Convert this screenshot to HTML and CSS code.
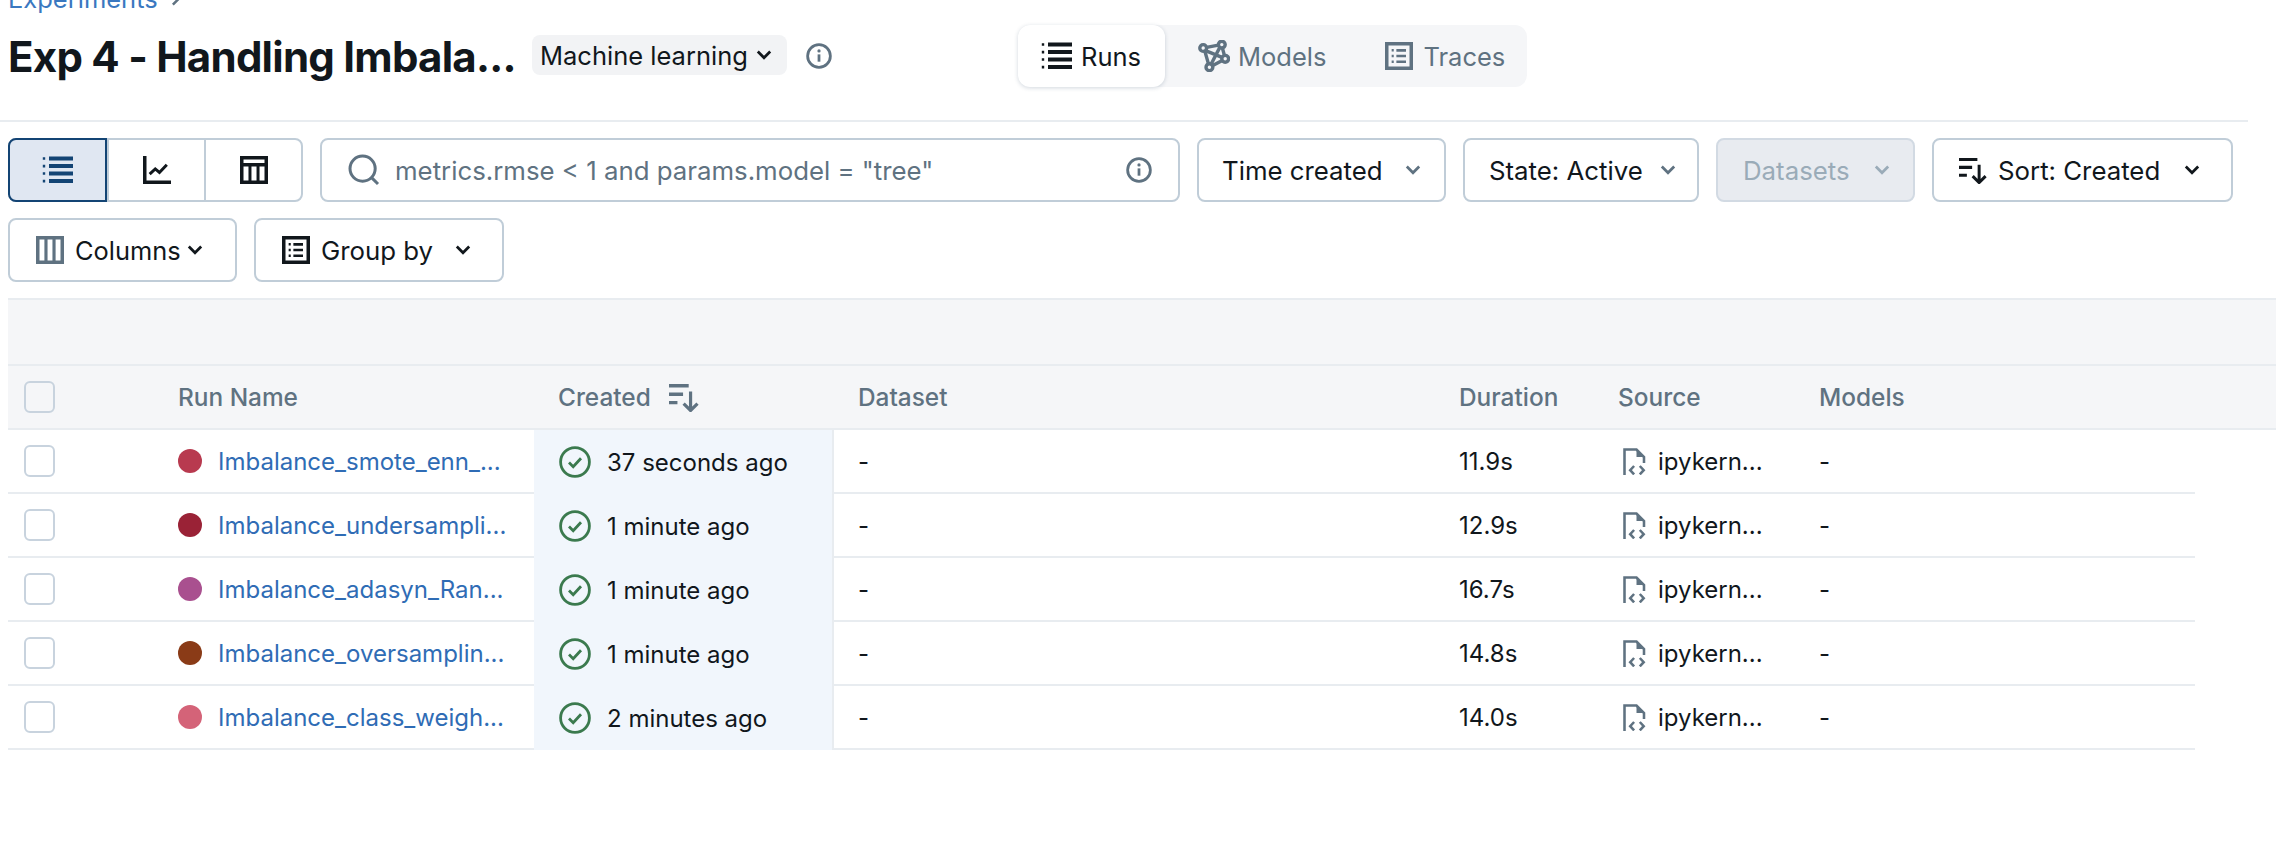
FILE: index.html
```html
<!DOCTYPE html>
<html lang="en">
<head>
    <meta charset="UTF-8">
    <title>Exp 4 - Handling Imbalance</title>
    <link rel="stylesheet" href="styles.css">
</head>
<body>
    <svg class="icon-defs" width="0" height="0">
        <defs>
            <symbol id="i-list" viewBox="0 0 16 16">
                <path d="M3.5 2.25H15.5M3.5 6H15.5M3.5 9.75H15.5M3.5 13.5H15.5" fill="none" stroke="currentColor" stroke-width="2"/>
                <path d="M.4 1.6h1.2v1.3H.4zM.4 5.4h1.2v1.3H.4zM.4 9.1h1.2v1.3H.4zM.4 12.9h1.2v1.3H.4z" fill="currentColor"/>
            </symbol>
            <symbol id="i-models" viewBox="0 0 16 16">
                <g fill="none" stroke="currentColor" stroke-width="1.7">
                    <circle cx="2.6" cy="4" r="1.7"/>
                    <circle cx="11.9" cy="2.3" r="1.7"/>
                    <circle cx="13.6" cy="9.4" r="1.7"/>
                    <circle cx="5.7" cy="13.6" r="1.7"/>
                    <path d="M4.3 3.7l5.9-1.1M3.8 5.3l8.2 3.4M3.4 5.5l1.8 6.3M12.2 4l1 3.7M12.1 10.2l-4.7 2.6M10.9 3.7L6.6 12"/>
                </g>
            </symbol>
            <symbol id="i-traces" viewBox="0 0 16 16">
                <rect x="1" y="1" width="14" height="14" fill="none" stroke="currentColor" stroke-width="2"/>
                <path d="M6.5 4.75h5.5M6.5 8h5.5M6.5 11.25h5.5" fill="none" stroke="currentColor" stroke-width="1.5"/>
                <path d="M3.8 4h1.2v1.4H3.8zM3.8 7.3h1.2v1.4H3.8zM3.8 10.6h1.2V12H3.8z" fill="currentColor"/>
            </symbol>
            <symbol id="i-chart" viewBox="0 0 16 16">
                <path d="M1 0v15h15" fill="none" stroke="currentColor" stroke-width="2"/>
                <path d="M3.8 10.4l3.2-3 2.4 2 4.2-4.4" fill="none" stroke="currentColor" stroke-width="1.7"/>
            </symbol>
            <symbol id="i-table" viewBox="0 0 16 16">
                <rect x="1" y="1" width="14" height="14" fill="none" stroke="currentColor" stroke-width="2"/>
                <path d="M1 5h14" stroke="currentColor" stroke-width="2"/>
                <path d="M5.7 5v10M10.3 5v10" stroke="currentColor" stroke-width="1.7"/>
            </symbol>
            <symbol id="i-columns" viewBox="0 0 16 16">
                <rect x="1" y="1" width="14" height="14" fill="none" stroke="currentColor" stroke-width="2"/>
                <path d="M5.7 1v14M10.3 1v14" stroke="currentColor" stroke-width="1.8"/>
            </symbol>
            <symbol id="i-search" viewBox="0 0 16 16">
                <circle cx="7.3" cy="7.3" r="6.3" fill="none" stroke="currentColor" stroke-width="1.5"/>
                <path d="M11.8 11.8L15 15" fill="none" stroke="currentColor" stroke-width="1.5"/>
            </symbol>
            <symbol id="i-info" viewBox="0 0 16 16">
                <circle cx="8" cy="8" r="7" fill="none" stroke="currentColor" stroke-width="1.7"/>
                <path d="M8 7v4.5" stroke="currentColor" stroke-width="1.7"/>
                <circle cx="8" cy="4.9" r="1" fill="currentColor"/>
            </symbol>
            <symbol id="i-chevron" viewBox="0 0 16 16">
                <path d="M3.5 5.5L8 10l4.5-4.5" fill="none" stroke="currentColor" stroke-width="2"/>
            </symbol>
            <symbol id="i-sort" viewBox="0 0 16 16">
                <path d="M0 2h10.5M0 6.5h7.5M0 11h4.5" fill="none" stroke="currentColor" stroke-width="1.8"/>
                <path d="M11.5 5v10M7.8 11.5l3.7 3.7 3.7-3.7" fill="none" stroke="currentColor" stroke-width="1.7"/>
            </symbol>
            <symbol id="i-check" viewBox="0 0 16 16">
                <circle cx="8" cy="8" r="7.2" fill="none" stroke="currentColor" stroke-width="1.4"/>
                <path d="M5 8.3l2.1 2.1L11 6.1" fill="none" stroke="currentColor" stroke-width="1.4"/>
            </symbol>
            <symbol id="i-file" viewBox="0 0 16 18">
                <path d="M1 18V1h8l5 5v4" fill="none" stroke="currentColor" stroke-width="1.7"/>
                <path d="M9 1v5h5z" fill="currentColor"/>
                <path d="M7.4 12l-2.6 2.8 2.6 2.8M11.2 12l2.6 2.8-2.6 2.8" fill="none" stroke="currentColor" stroke-width="1.7"/>
            </symbol>
        </defs>
    </svg>

    <nav class="breadcrumb">
        <a href="#">Experiments</a>
        <svg class="chevron-right"><use href="#i-chevron"/></svg>
    </nav>

    <header class="page-header">
        <h1>Exp 4 - Handling Imbala...</h1>
        <span class="tag">Machine learning <svg class="tag-chevron"><use href="#i-chevron"/></svg></span>
        <svg class="info-icon"><use href="#i-info"/></svg>
        <div class="tabs">
            <div class="tab tab-active"><svg><use href="#i-list"/></svg>Runs</div>
            <div class="tab"><svg><use href="#i-models"/></svg>Models</div>
            <div class="tab"><svg class="tab-traces"><use href="#i-traces"/></svg>Traces</div>
        </div>
    </header>

    <section class="toolbar">
        <div class="segments">
            <div class="segment segment-active"><svg class="icon-list"><use href="#i-list"/></svg></div>
            <div class="segment"><svg><use href="#i-chart"/></svg></div>
            <div class="segment"><svg><use href="#i-table"/></svg></div>
        </div>
        <div class="search">
            <svg class="search-icon"><use href="#i-search"/></svg>
            <span class="search-text">metrics.rmse &lt; 1 and params.model = "tree"</span>
            <svg class="search-info"><use href="#i-info"/></svg>
        </div>
        <div class="btn btn-time">Time created <svg class="chevron muted"><use href="#i-chevron"/></svg></div>
        <div class="btn btn-state">State: Active <svg class="chevron muted"><use href="#i-chevron"/></svg></div>
        <div class="btn btn-datasets">Datasets <svg class="chevron"><use href="#i-chevron"/></svg></div>
        <div class="btn btn-sort"><svg class="btn-icon"><use href="#i-sort"/></svg>Sort: Created <svg class="chevron"><use href="#i-chevron"/></svg></div>
        <div class="btn btn-columns"><svg class="btn-icon muted"><use href="#i-columns"/></svg>Columns <svg class="chevron"><use href="#i-chevron"/></svg></div>
        <div class="btn btn-group"><svg class="btn-icon"><use href="#i-traces"/></svg>Group by <svg class="chevron"><use href="#i-chevron"/></svg></div>
    </section>

    <section class="runs">
        <div class="runs-band"></div>
        <div class="row row-head">
            <div class="cell cell-select"><span class="checkbox"></span></div>
            <div class="cell cell-name">Run Name</div>
            <div class="cell cell-created">Created <svg class="sort-icon"><use href="#i-sort"/></svg></div>
            <div class="cell cell-dataset">Dataset</div>
            <div class="cell cell-duration">Duration</div>
            <div class="cell cell-source">Source</div>
            <div class="cell cell-models">Models</div>
        </div>

        <div class="row">
            <div class="cell cell-select"><span class="checkbox"></span></div>
            <div class="cell cell-name"><span class="dot dot-1"></span><a href="#">Imbalance_smote_enn_...</a></div>
            <div class="cell cell-created"><svg class="status"><use href="#i-check"/></svg>37 seconds ago</div>
            <div class="cell cell-dataset">-</div>
            <div class="cell cell-duration">11.9s</div>
            <div class="cell cell-source"><svg class="file"><use href="#i-file"/></svg>ipykern...</div>
            <div class="cell cell-models">-</div>
        </div>
        <div class="row">
            <div class="cell cell-select"><span class="checkbox"></span></div>
            <div class="cell cell-name"><span class="dot dot-2"></span><a href="#">Imbalance_undersampli...</a></div>
            <div class="cell cell-created"><svg class="status"><use href="#i-check"/></svg>1 minute ago</div>
            <div class="cell cell-dataset">-</div>
            <div class="cell cell-duration">12.9s</div>
            <div class="cell cell-source"><svg class="file"><use href="#i-file"/></svg>ipykern...</div>
            <div class="cell cell-models">-</div>
        </div>
        <div class="row">
            <div class="cell cell-select"><span class="checkbox"></span></div>
            <div class="cell cell-name"><span class="dot dot-3"></span><a href="#">Imbalance_adasyn_Ran...</a></div>
            <div class="cell cell-created"><svg class="status"><use href="#i-check"/></svg>1 minute ago</div>
            <div class="cell cell-dataset">-</div>
            <div class="cell cell-duration">16.7s</div>
            <div class="cell cell-source"><svg class="file"><use href="#i-file"/></svg>ipykern...</div>
            <div class="cell cell-models">-</div>
        </div>
        <div class="row">
            <div class="cell cell-select"><span class="checkbox"></span></div>
            <div class="cell cell-name"><span class="dot dot-4"></span><a href="#">Imbalance_oversamplin...</a></div>
            <div class="cell cell-created"><svg class="status"><use href="#i-check"/></svg>1 minute ago</div>
            <div class="cell cell-dataset">-</div>
            <div class="cell cell-duration">14.8s</div>
            <div class="cell cell-source"><svg class="file"><use href="#i-file"/></svg>ipykern...</div>
            <div class="cell cell-models">-</div>
        </div>
        <div class="row">
            <div class="cell cell-select"><span class="checkbox"></span></div>
            <div class="cell cell-name"><span class="dot dot-5"></span><a href="#">Imbalance_class_weigh...</a></div>
            <div class="cell cell-created"><svg class="status"><use href="#i-check"/></svg>2 minutes ago</div>
            <div class="cell cell-dataset">-</div>
            <div class="cell cell-duration">14.0s</div>
            <div class="cell cell-source"><svg class="file"><use href="#i-file"/></svg>ipykern...</div>
            <div class="cell cell-models">-</div>
        </div>
    </section>
</body>
</html>
```

FILE: styles.css
```css
/* General */
html, body {
    height: 100%;
    overflow: hidden;
}

body {
    margin: 0;
    padding: 0;
    background-color: #fff;
    color: #11171c;
    font-family: Inter, 'Liberation Sans', sans-serif;
    font-size: 24px;
}

a {
    color: #2f6cb5;
    text-decoration: none;
}

svg {
    display: block;
    flex: none;
}

.icon-defs {
    position: absolute;
}

.muted {
    color: #5f7281;
}

/* Breadcrumb, scrolled partly out of view */
.breadcrumb {
    display: flex;
    align-items: center;
    height: 30px;
    margin: -16px 0 0 8px;
    font-size: 25.5px;
    line-height: 30px;
}

.breadcrumb a {
    color: #3a78c0;
}

.chevron-right {
    width: 20px;
    height: 20px;
    margin-left: 8px;
    color: #5f7281;
    transform: rotate(-90deg);
}

/* Header */
.page-header {
    display: flex;
    align-items: center;
    height: 62px;
    margin: 11px 0 0;
    padding-left: 8px;
}

.page-header h1 {
    width: 524px;
    margin: 0;
    font-size: 42px;
    font-weight: 700;
    letter-spacing: -0.75px;
    white-space: nowrap;
}

.tag {
    display: flex;
    align-items: center;
    justify-content: space-between;
    box-sizing: border-box;
    width: 255px;
    height: 40px;
    margin-bottom: 2px;
    padding: 0 12px 0 8px;
    font-size: 25.5px;
    background-color: #f2f3f5;
    border-radius: 8px;
}

.tag-chevron {
    width: 22px;
    height: 22px;
}

.info-icon {
    width: 26px;
    height: 26px;
    margin: 0 186px 0 19px;
    color: #5f7281;
}

.tabs {
    display: flex;
    width: 509px;
    height: 62px;
    font-size: 25.5px;
    background-color: #f5f6f8;
    border-radius: 12px;
}

.tab {
    display: flex;
    flex: none;
    align-items: center;
    gap: 8px;
    padding: 0 26px 0 33px;
    color: #5f7281;
}

.tab svg {
    width: 32px;
    height: 32px;
}

.tab-active {
    box-sizing: border-box;
    width: 147px;
    padding: 0 0 0 23px;
    color: #11171c;
    background-color: #fff;
    border-radius: 12px;
    box-shadow: 0 1px 4px rgba(30, 60, 90, 0.2);
}

.tab svg.tab-traces {
    width: 28px;
    height: 28px;
    margin-right: 2px;
}

/* Toolbar */
.toolbar {
    display: flex;
    flex-wrap: wrap;
    gap: 16px 17px;
    width: 2240px;
    margin: 33px 0 0;
    padding: 16px 0 0 8px;
    font-size: 25.8px;
    border-top: 2px solid #e8ecf0;
}

.segments {
    display: flex;
    width: 295px;
    height: 64px;
    box-sizing: border-box;
    border: 2px solid #c0cdd8;
    border-radius: 8px;
}

.segment {
    display: flex;
    align-items: center;
    justify-content: center;
    flex: 1;
    border-left: 2px solid #c0cdd8;
}

.segment svg {
    width: 28px;
    height: 28px;
}

.segment-active {
    margin: -2px 0 -2px -2px;
    flex: none;
    width: 99px;
    box-sizing: border-box;
    color: #134474;
    background-color: #e0e7f2;
    border: 2px solid #134474;
    border-radius: 8px 0 0 8px;
}

.segment svg.icon-list {
    width: 32px;
    height: 32px;
}

.search {
    display: flex;
    align-items: center;
    box-sizing: border-box;
    width: 860px;
    height: 64px;
    padding: 0 26px 0 26px;
    color: #5f7281;
    border: 2px solid #c0cdd8;
    border-radius: 8px;
}

.search-icon {
    width: 32px;
    height: 32px;
}

.search-text {
    flex: 1;
    margin-left: 15px;
}

.search-info {
    width: 26px;
    height: 26px;
}

.btn {
    display: flex;
    align-items: center;
    box-sizing: border-box;
    height: 64px;
    padding: 0 20px 0 24px;
    border: 2px solid #c0cdd8;
    border-radius: 8px;
    white-space: nowrap;
}

.chevron {
    width: 22px;
    height: 22px;
    margin-left: auto;
}

.btn-icon {
    width: 28px;
    height: 28px;
    margin-right: 11px;
}

.btn-time {
    width: 249px;
    padding-left: 23px;
}

.btn-state {
    width: 236px;
    padding-right: 18px;
}

.btn-datasets {
    width: 199px;
    padding-left: 25px;
    color: #9aabb8;
    background-color: #e8ebf0;
    border-color: #d2dae3;
}

.btn-sort {
    width: 301px;
    padding: 0 28px 0 25px;
}

.btn-columns {
    width: 229px;
    padding: 0 29px 0 26px;
    font-size: 25.4px;
}

.btn-group {
    width: 250px;
    padding: 0 28px 0 26px;
}

/* Table */
.runs {
    margin: 16px 0 0 8px;
}

.runs-band {
    height: 64px;
    background-color: #f5f6f8;
    border-top: 2px solid #e8ecf0;
    border-bottom: 2px solid #e8ecf0;
}

.row {
    display: grid;
    grid-template-columns: 162px 364px 300px 609px 159px 201px 392px;
    width: 2187px;
    height: 64px;
    box-sizing: border-box;
    border-bottom: 2px solid #e8ecf0;
}

.row-head {
    width: auto;
    font-size: 24.4px;
    font-weight: 500;
    color: #5f7281;
    background-color: #f5f6f8;
}

.cell {
    display: flex;
    align-items: center;
    padding-left: 16px;
    white-space: nowrap;
}

.cell-name {
    padding-left: 8px;
}

.cell-created {
    padding-left: 25px;
    background-color: #f1f6fc;
    border-right: 2px solid #e8ecf0;
    margin-bottom: -2px;
}

.row-head .cell-created {
    padding-left: 24px;
    background: none;
    border: none;
    margin: 0;
}

.cell-dataset {
    padding-left: 24px;
}

.checkbox {
    display: block;
    box-sizing: border-box;
    width: 31px;
    height: 32px;
    background-color: #fff;
    border: 2px solid #c8d3de;
    border-radius: 6px;
}

.row-head .checkbox {
    background: none;
}

.dot {
    width: 24px;
    height: 24px;
    margin-right: 16px;
    border-radius: 50%;
}

.dot-1 { background-color: #b83a4f; }
.dot-2 { background-color: #9a2236; }
.dot-3 { background-color: #a9508f; }
.dot-4 { background-color: #8a3b17; }
.dot-5 { background-color: #d46378; }

.sort-icon {
    width: 30px;
    height: 30px;
    margin-left: 18px;
}

.status {
    width: 32px;
    height: 32px;
    margin-right: 16px;
    color: #3b7a4e;
}

.file {
    width: 24px;
    height: 27px;
    margin: 0 11px 0 5px;
    color: #5f7281;
}
```
